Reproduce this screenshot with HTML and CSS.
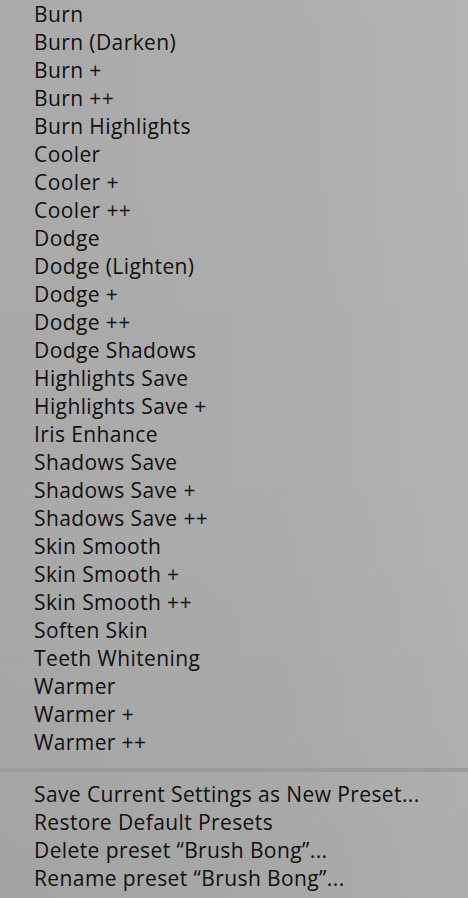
FILE: index.html
```html
<!DOCTYPE html>
<html>
<head>
<meta charset="utf-8">
<link rel="stylesheet" href="styles.css">
</head>
<body>
<div class="menu">
  <ul class="list">
    <li>Burn</li>
    <li>Burn (Darken)</li>
    <li>Burn +</li>
    <li>Burn ++</li>
    <li>Burn Highlights</li>
    <li>Cooler</li>
    <li>Cooler +</li>
    <li>Cooler ++</li>
    <li>Dodge</li>
    <li>Dodge (Lighten)</li>
    <li>Dodge +</li>
    <li>Dodge ++</li>
    <li>Dodge Shadows</li>
    <li>Highlights Save</li>
    <li>Highlights Save +</li>
    <li>Iris Enhance</li>
    <li>Shadows Save</li>
    <li>Shadows Save +</li>
    <li>Shadows Save ++</li>
    <li>Skin Smooth</li>
    <li>Skin Smooth +</li>
    <li>Skin Smooth ++</li>
    <li>Soften Skin</li>
    <li>Teeth Whitening</li>
    <li>Warmer</li>
    <li>Warmer +</li>
    <li>Warmer ++</li>
  </ul>
  <div class="sep"></div>
  <ul class="list">
    <li>Save Current Settings as New Preset...</li>
    <li>Restore Default Presets</li>
    <li>Delete preset “Brush Bong”...</li>
    <li>Rename preset “Brush Bong”...</li>
  </ul>
</div>
</body>
</html>
```
FILE: styles.css
```css
html, body {
  margin: 0;
  padding: 0;
  height: 100%;
}
body {
  background: linear-gradient(90deg, #a9a9a9 0%, #acacac 60%, #b3b3b3 100%);
  font-family: "Open Sans", "Liberation Sans", sans-serif;
  color: #101010;
}
.menu {
  display: flex;
  flex-direction: column;
  min-height: 100%;
  background: linear-gradient(180deg, rgba(255,255,255,0.02) 0%, rgba(0,0,0,0) 50%, rgba(0,0,0,0.03) 100%);
}
.list {
  list-style: none;
  margin: 0;
  padding: 0;
}
.list li {
  height: 28px;
  line-height: 28px;
  padding-left: 34px;
  font-size: 21px;
  letter-spacing: 0.4px;
  white-space: nowrap;
}
.sep {
  height: 4px;
  margin: 12px 0 8px;
  background: #9b9b9b;
}
```
